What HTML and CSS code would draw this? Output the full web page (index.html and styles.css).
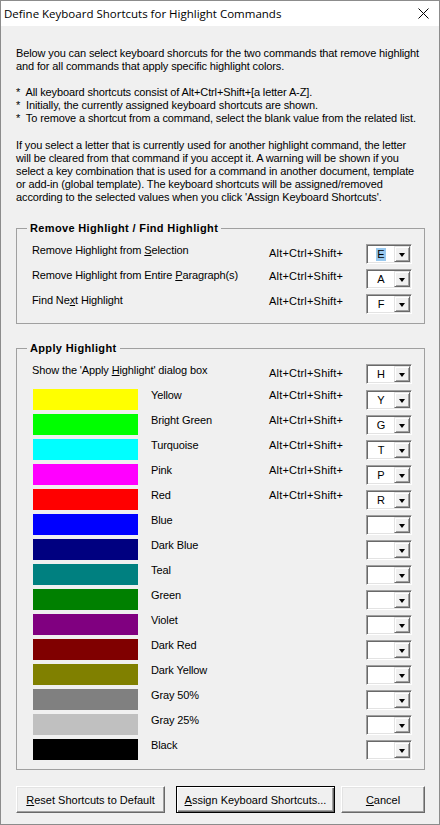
FILE: index.html
```html
<!DOCTYPE html>
<html>
<head>
<meta charset="utf-8">
<link rel="stylesheet" href="styles.css">
</head>
<body>
<div class="window">
  <div class="titlebar">
    <span class="title">Define Keyboard Shortcuts for Highlight Commands</span>
    <svg class="close" width="11" height="11" viewBox="0 0 11 11"><path d="M0.5 0.5 L10.5 10.5 M10.5 0.5 L0.5 10.5" stroke="#000" stroke-width="1" fill="none"/></svg>
  </div>
  <div class="content">
    <p class="intro">Below you can select keyboard shorcuts for the two commands that remove highlight<br>and for all commands that apply specific highlight colors.<br><br>*&nbsp; All keyboard shortcuts consist of Alt+Ctrl+Shift+[a letter A-Z].<br>*&nbsp; Initially, the currently assigned keyboard shortcuts are shown.<br>*&nbsp; To remove a shortcut from a command, select the blank value from the related list.</p>
    <p class="info">If you select a letter that is currently used for another highlight command, the letter<br>will be cleared from that command if you accept it. A warning will be shown if you<br>select a key combination that is used for a command in another document, template<br>or add-in (global template). The keyboard shortcuts will be assigned/removed<br>according to the selected values when you click 'Assign Keyboard Shortcuts'.</p>

    <fieldset class="group group-remove">
      <legend>Remove Highlight / Find Highlight</legend>
      <div class="rows">
        <div class="row">
          <span class="label">Remove Highlight from <u>S</u>election</span>
          <span class="keys k-low">Alt+Ctrl+Shift+</span>
          <span class="combo"><span class="val"><span class="sel">E</span></span><span class="arrow"></span></span>
        </div>
        <div class="row">
          <span class="label">Remove Highlight from Entire <u>P</u>aragraph(s)</span>
          <span class="keys">Alt+Ctrl+Shift+</span>
          <span class="combo"><span class="val">A</span><span class="arrow"></span></span>
        </div>
        <div class="row">
          <span class="label">Find Ne<u>x</u>t Highlight</span>
          <span class="keys">Alt+Ctrl+Shift+</span>
          <span class="combo"><span class="val">F</span><span class="arrow"></span></span>
        </div>
      </div>
    </fieldset>

    <fieldset class="group group-apply">
      <legend>Apply Highlight</legend>
      <div class="rows">
        <div class="row">
          <span class="label">Show the 'Apply <u>H</u>ighlight' dialog box</span>
          <span class="keys k-low">Alt+Ctrl+Shift+</span>
          <span class="combo"><span class="val">H</span><span class="arrow"></span></span>
        </div>
        <div class="row crow"><span class="swatch c-yellow"></span><span class="cname">Yellow</span><span class="keys">Alt+Ctrl+Shift+</span><span class="combo"><span class="val">Y</span><span class="arrow"></span></span></div>
        <div class="row crow"><span class="swatch c-bgreen"></span><span class="cname">Bright Green</span><span class="keys">Alt+Ctrl+Shift+</span><span class="combo"><span class="val">G</span><span class="arrow"></span></span></div>
        <div class="row crow"><span class="swatch c-turq"></span><span class="cname">Turquoise</span><span class="keys">Alt+Ctrl+Shift+</span><span class="combo"><span class="val">T</span><span class="arrow"></span></span></div>
        <div class="row crow"><span class="swatch c-pink"></span><span class="cname">Pink</span><span class="keys">Alt+Ctrl+Shift+</span><span class="combo"><span class="val">P</span><span class="arrow"></span></span></div>
        <div class="row crow"><span class="swatch c-red"></span><span class="cname">Red</span><span class="keys">Alt+Ctrl+Shift+</span><span class="combo"><span class="val">R</span><span class="arrow"></span></span></div>
        <div class="row crow"><span class="swatch c-blue"></span><span class="cname">Blue</span><span class="keys"></span><span class="combo"><span class="val"></span><span class="arrow"></span></span></div>
        <div class="row crow"><span class="swatch c-dblue"></span><span class="cname">Dark Blue</span><span class="keys"></span><span class="combo"><span class="val"></span><span class="arrow"></span></span></div>
        <div class="row crow"><span class="swatch c-teal"></span><span class="cname">Teal</span><span class="keys"></span><span class="combo"><span class="val"></span><span class="arrow"></span></span></div>
        <div class="row crow"><span class="swatch c-green"></span><span class="cname">Green</span><span class="keys"></span><span class="combo"><span class="val"></span><span class="arrow"></span></span></div>
        <div class="row crow"><span class="swatch c-violet"></span><span class="cname">Violet</span><span class="keys"></span><span class="combo"><span class="val"></span><span class="arrow"></span></span></div>
        <div class="row crow"><span class="swatch c-dred"></span><span class="cname">Dark Red</span><span class="keys"></span><span class="combo"><span class="val"></span><span class="arrow"></span></span></div>
        <div class="row crow"><span class="swatch c-dyellow"></span><span class="cname">Dark Yellow</span><span class="keys"></span><span class="combo"><span class="val"></span><span class="arrow"></span></span></div>
        <div class="row crow"><span class="swatch c-gray50"></span><span class="cname">Gray 50%</span><span class="keys"></span><span class="combo"><span class="val"></span><span class="arrow"></span></span></div>
        <div class="row crow"><span class="swatch c-gray25"></span><span class="cname">Gray 25%</span><span class="keys"></span><span class="combo"><span class="val"></span><span class="arrow"></span></span></div>
        <div class="row crow"><span class="swatch c-black"></span><span class="cname">Black</span><span class="keys"></span><span class="combo"><span class="val"></span><span class="arrow"></span></span></div>
      </div>
    </fieldset>

    <div class="buttons">
      <button class="btn btn-reset"><u>R</u>eset Shortcuts to Default</button>
      <button class="btn btn-assign"><u>A</u>ssign Keyboard Shortcuts...</button>
      <button class="btn btn-cancel"><u>C</u>ancel</button>
    </div>
  </div>
</div>
</body>
</html>
```

FILE: styles.css
```css
* { box-sizing: border-box; }
html, body { margin: 0; padding: 0; }
body {
  width: 440px;
  height: 825px;
  background: #f0f0f0;
  font-family: "Liberation Sans", Arial, sans-serif;
  font-size: 11px;
  letter-spacing: -0.12px;
  color: #000;
}
.window {
  width: 440px;
  height: 825px;
  border: 1px solid #8c8c8c;
  background: #f0f0f0;
  display: flex;
  flex-direction: column;
  overflow: hidden;
}
.titlebar {
  height: 25px;
  background: #fff;
  display: flex;
  align-items: center;
  justify-content: space-between;
  padding: 0 10px 0 3px;
  flex: none;
}
.title {
  font-family: "Open Sans", "Liberation Sans", sans-serif;
  font-size: 11.5px;
  letter-spacing: 0;
  color: #000;
}
.close { display: block; }
.content {
  padding: 0 14px 0 15px;
}
p { margin: 0; line-height: 13px; white-space: nowrap; }
.intro { margin-top: 21px; }
.info { margin-top: 14px; }

.group {
  margin: 0;
  padding: 0;
  border: 1px solid #a0a0a0;
  min-width: 0;
}
.group legend {
  margin-left: 10px;
  padding: 0 3px;
  font-weight: bold;
  line-height: 14px;
  font-size: 11px;
  letter-spacing: 0.35px;
}
.group-remove { margin-top: 17px; }
.group-apply { margin-top: 17px; }
.rows {
  padding: 9px 12px 9px 15px;
  display: flex;
  flex-direction: column;
}
.group-remove .row + .row { margin-top: 5px; }
.group-apply .rows { padding-bottom: 5px; }
.group-apply .row { height: 25px; }
.row {
  display: flex;
  align-items: flex-start;
  line-height: 13px;
  white-space: nowrap;
}
.label { flex: 1; }
.keys {
  width: 97px;
  padding-top: 1px;
  letter-spacing: 0.2px;
}
.keys.k-low { padding-top: 3px; }
.swatch {
  width: 105px;
  height: 21px;
  margin-left: 1px;
  flex: none;
}
.cname {
  flex: 1;
  margin-left: 13px;
}
.crow .keys { padding-top: 0; }
.crow .combo { margin-top: 1px; }

.combo {
  width: 46px;
  height: 20px;
  flex: none;
  display: flex;
  background: #fff;
  border-top: 1px solid #a0a0a0;
  border-left: 1px solid #a0a0a0;
  border-right: 1px solid #fff;
  border-bottom: 1px solid #fff;
  box-shadow: inset 1px 1px 0 #696969, inset -1px -1px 0 #e3e3e3;
  padding: 1px;
}
.val {
  flex: 1;
  display: flex;
  align-items: center;
  justify-content: center;
  padding-top: 1px;
  letter-spacing: 0;
}
.sel {
  background: #99c9ef;
  padding: 0 1px;
  line-height: 13px;
}
.arrow {
  width: 16px;
  height: 16px;
  flex: none;
  background: #f0f0f0;
  border-top: 1px solid #e3e3e3;
  border-left: 1px solid #e3e3e3;
  border-right: 1px solid #696969;
  border-bottom: 1px solid #696969;
  box-shadow: inset 1px 1px 0 #fff, inset -1px -1px 0 #a0a0a0;
  position: relative;
}
.arrow::after {
  content: "";
  position: absolute;
  left: 4px;
  top: 6px;
  border-left: 3.5px solid transparent;
  border-right: 3.5px solid transparent;
  border-top: 4px solid #000;
}

.c-yellow { background: #ffff00; }
.c-bgreen { background: #00ff00; }
.c-turq { background: #00ffff; }
.c-pink { background: #ff00ff; }
.c-red { background: #ff0000; }
.c-blue { background: #0000ff; }
.c-dblue { background: #000080; }
.c-teal { background: #008080; }
.c-green { background: #008000; }
.c-violet { background: #800080; }
.c-dred { background: #800000; }
.c-dyellow { background: #808000; }
.c-gray50 { background: #808080; }
.c-gray25 { background: #c0c0c0; }
.c-black { background: #000000; }

.buttons {
  margin-top: 16px;
  display: flex;
}
.btn {
  height: 27px;
  font-family: "Liberation Sans", Arial, sans-serif;
  font-size: 11px;
  letter-spacing: 0;
  color: #000;
  background: #f0f0f0;
  border-top: 1px solid #fff;
  border-left: 1px solid #fff;
  border-right: 1px solid #696969;
  border-bottom: 1px solid #696969;
  box-shadow: inset -1px -1px 0 #a0a0a0, inset 1px 1px 0 #e3e3e3;
  padding: 0;
  margin: 0;
}
.btn-reset { width: 149px; }
.btn-assign {
  width: 159px;
  margin-left: 11px;
  border: 1px solid #000;
  box-shadow: inset 1px 1px 0 #fff, inset -1px -1px 0 #696969, inset -2px -2px 0 #a0a0a0;
}
.btn-cancel { width: 84px; margin-left: 6px; }
```
